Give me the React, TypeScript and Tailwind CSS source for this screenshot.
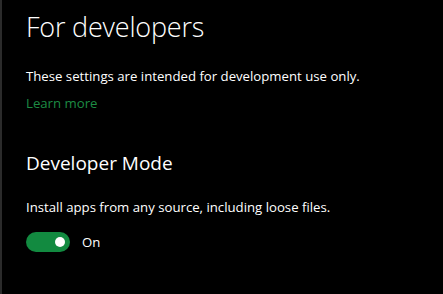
export default function App() {
  return (
    <div className="flex h-[294px] w-[443px] bg-black text-white" style={{ fontFamily: '"Open Sans", sans-serif' }}>
      {/* left edge divider */}
      <div className="w-[2px] bg-[#2b2b2b]" />
      <div className="flex flex-col pl-[24px] pt-[9px]">
        <h1 className="text-[27px] font-light leading-[36px] tracking-[-0.2px]">For developers</h1>
        <p className="mt-[21px] text-[13.2px] leading-[20px]">These settings are intended for development use only.</p>
        <a className="mt-[7px] text-[13.2px] leading-[20px] text-[#1d8c44]">Learn more</a>
        <h2 className="mt-[37px] text-[19px] leading-[26px]">Developer Mode</h2>
        <p className="mt-[21px] text-[13.2px] leading-[20px]">Install apps from any source, including loose files.</p>
        <div className="mt-[15px] flex items-center gap-[12px]">
          <div className="flex h-[20px] w-[44px] items-center justify-end rounded-full bg-[#128a40] pr-[5px]">
            <div className="h-[10px] w-[10px] rounded-full bg-white" />
          </div>
          <span className="text-[13.2px] leading-[20px]">On</span>
        </div>
      </div>
    </div>
  )
}
